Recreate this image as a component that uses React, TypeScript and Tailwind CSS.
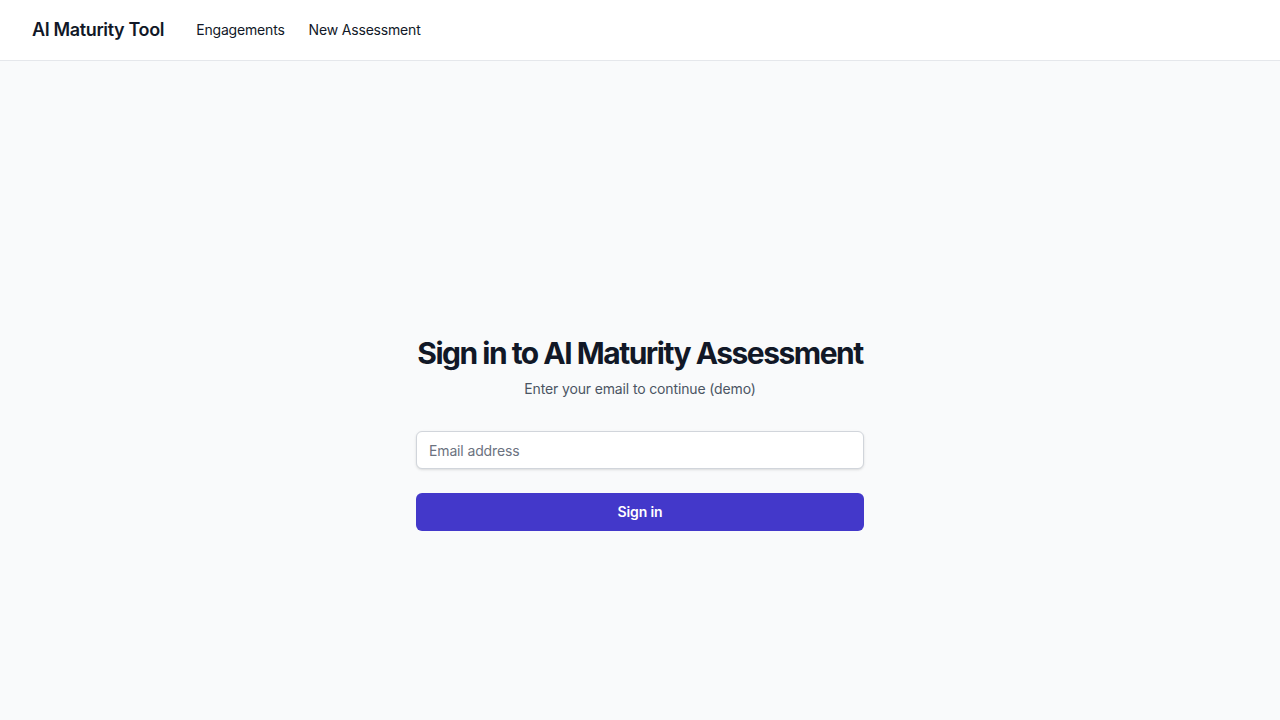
export default function App() {
  return (
    <div className="min-h-screen bg-[#f9fafb] text-[#111827]" style={{ fontFamily: "Inter, 'Noto Sans', sans-serif" }}>
      <header className="h-[61px] bg-white border-b border-[#e5e7eb] flex items-center px-8">
        <span className="text-lg font-semibold tracking-[-0.02em] text-[#111827]">AI Maturity Tool</span>
        <nav className="ml-8 flex gap-6 text-sm tracking-[-0.013em] text-[#111827]">
          <span>Engagements</span>
          <span>New Assessment</span>
        </nav>
      </header>
      <main className="h-[659px] pt-[85px] flex flex-col items-center justify-center">
        <div className="w-[448px] flex flex-col">
          <h1 className="text-3xl leading-9 font-bold tracking-[-0.05em] whitespace-nowrap text-center text-[#111827]">Sign in to AI Maturity Assessment</h1>
          <p className="mt-2 text-sm tracking-[-0.01em] text-center text-[#4b5563]">Enter your email to continue (demo)</p>
          <input
            type="email"
            placeholder="Email address"
            className="mt-8 h-[38px] w-full rounded-md border border-[#d1d5db] bg-white px-3 text-sm tracking-[-0.01em] shadow-sm placeholder:text-[#6b7280] outline-none"
          />
          <button className="mt-6 h-[38px] w-full rounded-md bg-[#4338ca] text-sm font-semibold tracking-[-0.01em] text-white">Sign in</button>
        </div>
      </main>
    </div>
  );
}
